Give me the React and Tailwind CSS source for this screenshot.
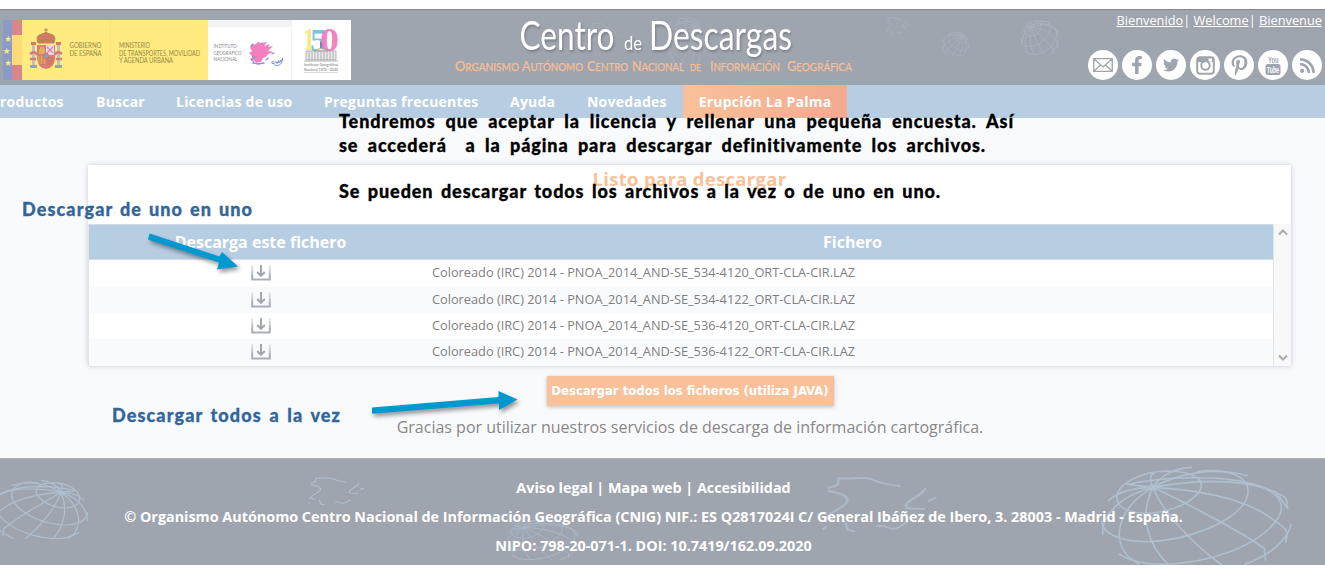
import React from "react";
import { FaFacebookF, FaTwitter, FaPinterestP, FaRss } from "react-icons/fa";

const globeLines = [
  "M42 100C40 62 92 20 160 18C226 18 258 48 232 86C205 124 152 145 108 145C68 143 43 126 42 100",
  "M232 20C290 8 358 28 350 88C342 150 240 220 120 230C50 232 8 206 6 168",
  "M66 58C150 36 286 26 376 62C432 88 442 128 414 172C366 248 254 296 150 298C100 298 66 282 48 268",
  "M127 67C184 25 274 5 349 32",
  "M127 67C214 45 330 42 396 72S436 110 444 130",
  "M127 67C234 75 334 100 394 150S444 200 439 232",
  "M127 67C214 120 334 200 389 250L392 285",
  "M127 67C154 150 224 240 289 300",
  "M127 67C94 150 114 240 164 300",
  "M127 67C54 120 24 210 69 275L94 298",
  "M127 67C54 90 4 150 9 208",
  "M127 67C84 68 44 80 22 107M127 67L67 58M127 67C119 45 119 30 129 25M127 67C144 30 184 8 217 8",
  "M452 178C444 226 400 272 344 298M414 78L444 130",
];

function Globe({ className, flip = false, weight = 1.2 }) {
  return (
    <svg className={className} viewBox="0 0 459 300" preserveAspectRatio="none" fill="none" stroke="currentColor" strokeWidth={weight} strokeLinecap="round">
      <g transform={flip ? "translate(459 0) scale(-1 1)" : undefined}>
        {globeLines.map((d) => <path key={d} d={d} vectorEffect="non-scaling-stroke" />)}
        <ellipse cx="127" cy="67" rx="14" ry="9" fill="currentColor" stroke="none" />
      </g>
    </svg>
  );
}

function Spain({ className }) {
  return (
    <svg className={className} viewBox="0 0 90 58" preserveAspectRatio="none" fill="none" stroke="currentColor" strokeWidth="2" strokeLinecap="round" strokeLinejoin="round">
      <path d="M5 12L12 9L13 2C22 4 30 0 38 3C46 8 54 9 60 10M5 15C14 17 22 20 19 27C14 34 5 36 3 43L10 44" />
      <path d="M18 46L20 54L25 55M43 50C50 48 52 56 60 51L66 46M80 13C77 20 64 25 65 31C68 34 72 32 79 33M83 25L88 22M1 53L3 51" />
    </svg>
  );
}

function Crest() {
  return (
    <svg x="29" y="7" width="34" height="43" viewBox="0 0 34 43">
      <path d="M8 18H26V32Q25 41 17 42Q9 41 8 32Z" fill="#d87f79" />
      <rect x="17" y="18" width="8" height="10" fill="#f3d6da" />
      <path d="M18 20l6 6M24 20l-6 6" stroke="#c98cb4" strokeWidth="1.2" />
      <path d="M10 27v-5h1v-2h4v2h1v5z" fill="#dcb05c" />
      <rect x="9" y="29" width="7" height="8" fill="#e6a55d" />
      <path d="M11 29v9M14 29v9M18 31h6M18 34h6M18 37h4" stroke="#c8645e" strokeWidth=".8" />
      <ellipse cx="17" cy="29" rx="2.4" ry="3" fill="#8b9cc9" stroke="#d87066" />
      <path d="M9 16Q6 8 13 7Q17 4 21 7Q28 8 25 16Z" fill="#d87668" stroke="#b38a52" strokeWidth="1" />
      <path d="M17 1v6M15 3h4M9 14Q17 11 25 14M12 8Q17 12 22 8" fill="none" stroke="#a98c50" strokeWidth="1" />
      <g fill="#c2bfc0">
        <rect x="3" y="18" width="3" height="20" />
        <rect x="28" y="18" width="3" height="20" />
      </g>
      <path d="M2 15h5v3H2zM27 15h5v3h-5z" fill="#cf7d60" />
      <path d="M1 27Q6 23 8 28M33 27Q28 23 26 28M1 32H7M27 32H33" fill="none" stroke="#d47a78" strokeWidth="2.4" />
      <path d="M1 38h7v3H1zM26 38h7v3h-7z" fill="#98a2b6" />
    </svg>
  );
}

function Logos() {
  return (
    <svg className="block h-[60px] w-[352px]" viewBox="0 0 352 60" fontFamily="Lato, sans-serif">
      <rect x="3" width="9" height="60" fill="#8b9bc7" />
      <rect x="12" width="10" height="60" fill="#d7868a" />
      <rect x="12" y="15" width="10" height="30" fill="#fbda78" />
      <g fill="#ffe878" fontSize="8.500" textAnchor="middle" fontFamily="DejaVu Sans, sans-serif">
        <text x="8" y="21.500">★</text>
        <text x="6.500" y="33.500">★</text>
        <text x="8" y="46">★</text>
      </g>
      <rect x="22" width="186" height="60" fill="#ffeb7f" />
      <rect x="110" width="1" height="60" fill="#fde476" />
      <Crest />
      <g fill="#96894f" fontSize="6.800">
        <text x="69.500" y="27.500" textLength="32" lengthAdjust="spacingAndGlyphs">GOBIERNO</text>
        <text x="69.500" y="35.500" textLength="32" lengthAdjust="spacingAndGlyphs">DE ESPAÑA</text>
        <text x="119" y="27.500" textLength="31" lengthAdjust="spacingAndGlyphs">MINISTERIO</text>
        <text x="119" y="35.500" textLength="81" lengthAdjust="spacingAndGlyphs">DE TRANSPORTES, MOVILIDAD</text>
        <text x="119" y="43.200" textLength="54" lengthAdjust="spacingAndGlyphs">Y AGENDA URBANA</text>
      </g>
      <rect x="208" width="143" height="60" fill="#fff" />
      <rect x="208" width="84" height="7" fill="#f3f3f3" />
      <rect x="291" width="1" height="60" fill="#f3f3f3" />
      <g fill="#85858c" fontSize="5.200">
        <text x="213.500" y="27.500" textLength="23" lengthAdjust="spacingAndGlyphs">INSTITUTO</text>
        <text x="213.500" y="34.500" textLength="28" lengthAdjust="spacingAndGlyphs">GEOGRÁFICO</text>
        <text x="213.500" y="41" textLength="24" lengthAdjust="spacingAndGlyphs">NACIONAL</text>
      </g>
      <path d="M251 25l5-1 2-2 3 1 6-1-3 4 6-2-2 3 5-1-5 5 6 1-6 2-2 3-3 1-2 4-5 1-2-3-3 1 1-5-3-3 3-2-2-3z" fill="#f37fc0" />
      <path d="M251 26l2-2M251 39l3 3-1 1 5 1M258 44l6-1M272 34l2-1M253 36l2 2M266 40l2-2" stroke="#8297cb" strokeWidth="1.300" fill="none" strokeLinecap="round" />
      <path d="M274 42q-3-1-2 1.500 2 1 4-2l1 2 1.500-3 .5 2.500 2-3M281 40q-2 2 0 2t1.500-4q-.5 6-3 7t-5 0" stroke="#7d98d2" strokeWidth="1" fill="none" strokeLinecap="round" />
      <g fontFamily="Liberation Serif, serif" fontWeight="700">
        <text x="303" y="30" fontSize="31" fill="#f8ec78" textLength="12" lengthAdjust="spacingAndGlyphs">1</text>
        <text x="310" y="31" fontSize="32" fill="#77c5e9" textLength="17" lengthAdjust="spacingAndGlyphs">5</text>
        <text x="320" y="31" fontSize="34" fill="#f184be" textLength="19" lengthAdjust="spacingAndGlyphs">0</text>
      </g>
      <path d="M320 21q5 4 0 9z" fill="#807bb9" />
      <g fill="#e9e9e9" stroke="#9b9b9b" strokeWidth=".7">
        <path d="M306 31h30v9h-30zM314 31l7-3 7 3z" />
        <path d="M309 32v8M312 32v8M315 32v8M318 32v8M321 32v8M324 32v8M327 32v8M330 32v8M333 32v8M304 41h34" />
      </g>
      <g fill="#999" fontSize="4" fontWeight="700">
        <text x="304" y="46" textLength="34" lengthAdjust="spacingAndGlyphs">Instituto Geográfico</text>
        <text x="304" y="50.500" textLength="34" lengthAdjust="spacingAndGlyphs">Nacional 1870 - 2020</text>
      </g>
      <path d="M304 52.500h34" stroke="#ddd" />
    </svg>
  );
}

function Title() {
  return (
    <svg className="block h-[75px] w-[400px]" viewBox="454 10 400 75" fontFamily="Lato, sans-serif">
      <g fill="#fff" className="drop-shadow-[1px_2px_1px_rgba(80,85,95,0.45)]">
        <text x="519.500" y="49.500" fontSize="40" textLength="95" lengthAdjust="spacingAndGlyphs">Centro</text>
        <text x="624" y="49.500" fontSize="20" textLength="18" lengthAdjust="spacingAndGlyphs">de</text>
        <text x="649" y="49.500" fontSize="40" textLength="143" lengthAdjust="spacingAndGlyphs">Descargas</text>
      </g>
      <g fill="#f6be95" stroke="#f6be95" strokeWidth=".25" fontSize="11">
        <text x="455" y="71" textLength="64" lengthAdjust="spacingAndGlyphs"><tspan fontSize="14">O</tspan>RGANISMO</text>
        <text x="522" y="71" textLength="61" lengthAdjust="spacingAndGlyphs"><tspan fontSize="14">A</tspan>UTÓNOMO</text>
        <text x="587" y="71" textLength="41" lengthAdjust="spacingAndGlyphs"><tspan fontSize="14">C</tspan>ENTRO</text>
        <text x="632" y="71" textLength="52" lengthAdjust="spacingAndGlyphs"><tspan fontSize="14">N</tspan>ACIONAL</text>
        <text x="690" y="71" fontSize="8.500" textLength="11" lengthAdjust="spacingAndGlyphs">DE</text>
        <text x="710" y="71" textLength="70" lengthAdjust="spacingAndGlyphs"><tspan fontSize="14">I</tspan>NFORMACIÓN</text>
        <text x="787" y="71" textLength="65" lengthAdjust="spacingAndGlyphs"><tspan fontSize="14">G</tspan>EOGRÁFICA</text>
      </g>
    </svg>
  );
}

function MailIcon() {
  return (
    <svg className="h-[14px] w-[20px]" viewBox="0 0 20 14" fill="none" stroke="currentColor" strokeWidth="1.300">
      <path d="M.7.700h18.600v12.600H.7zM1 1l9 8 9-8M1 13l6.500-6M19 13l-6.500-6" />
    </svg>
  );
}

function InstagramIcon() {
  return (
    <svg className="h-[19px] w-[19px]" viewBox="0 0 19 19">
      <rect x="1.200" y="1.200" width="16.600" height="16.600" rx="3" fill="none" stroke="currentColor" strokeWidth="2" />
      <path d="M1 6h17V3q0-2-2-2H3Q1 1 1 3z" fill="currentColor" />
      <rect x="12.500" y="2.500" width="3.500" height="3" fill="#fff" />
      <circle cx="9.500" cy="9.500" r="4.200" fill="#fff" stroke="currentColor" strokeWidth="2" />
    </svg>
  );
}

function YoutubeIcon() {
  return (
    <svg className="h-[20px] w-[16px] overflow-visible" viewBox="0 0 16 20" fontFamily="Liberation Sans Narrow, Liberation Sans, sans-serif" fontWeight="700">
      <text x="3" y="7.500" fontSize="9" textLength="10.500" lengthAdjust="spacingAndGlyphs" fill="currentColor">You</text>
      <rect x=".5" y="9" width="15" height="11" rx="2.500" fill="currentColor" />
      <text x="2" y="17.500" fontSize="8.500" textLength="12" lengthAdjust="spacingAndGlyphs" fill="#fff">Tube</text>
    </svg>
  );
}

const social = [
  <MailIcon />,
  <FaFacebookF size={18} />,
  <FaTwitter size={16} />,
  <InstagramIcon />,
  <FaPinterestP size={21} />,
  <YoutubeIcon />,
  <FaRss size={17} />,
];

function Header() {
  return (
    <header className="relative flex h-[76px] shrink-0 overflow-hidden border-t border-[#85878d] bg-[#9fa5af]">
      <Spain className="absolute left-[588px] top-[12px] h-[34px] w-[32px] text-[#a5adb9]" />
      <Globe className="absolute left-[668px] top-[5px] h-[50px] w-[36px] text-[#a6b0bc]" flip weight={0.7} />
      <Spain className="absolute left-[886px] top-[7px] h-[18px] w-[23px] text-[#adb9c7]" />
      <Globe className="absolute left-[942px] top-[21px] h-[25px] w-[27px] text-[#a8b2be]" flip weight={0.7} />
      <Globe className="absolute left-[1021px] top-[9px] h-[36px] w-[38px] text-[#a9b4c1]" weight={0.8} />
      <div className="pt-[10px]"><Logos /></div>
      <div className="relative ml-[102px]"><Title /></div>
      <div className="ml-auto flex flex-col items-end pr-[3px]">
        <div className="flex h-[20px] whitespace-pre text-[12.800px] leading-[20px] text-white">
          <a className="underline">Bienvenido</a><span>| </span><a className="underline">Welcome</a><span>| </span><a className="underline">Bienvenue</a>
        </div>
        <div className="mt-[20px] flex gap-[4px]">
          {social.map((icon, i) => (
            <span key={i} className="flex size-[30px] items-center justify-center rounded-full bg-white text-[#9fa5af]">{icon}</span>
          ))}
        </div>
      </div>
    </header>
  );
}

const links = [
  ["Productos", "w-[74px]"],
  ["Buscar", "w-[49px]"],
  ["Licencias de uso", "w-[117px]"],
  ["Preguntas frecuentes", "w-[155px]"],
  ["Ayuda", "w-[46px]"],
  ["Novedades", "w-[80px]"],
];

function Nav() {
  return (
    <nav className="flex h-[33px] shrink-0 overflow-hidden bg-[#b7cde2] text-[14px] font-bold leading-[33px] tracking-[0.22px] text-white">
      <div className="-ml-[9px] flex gap-[31px] pr-[16px]">
        {links.map(([label, width]) => (
          <a key={label} className={`${width} whitespace-nowrap`}>{label}</a>
        ))}
      </div>
      <a className="w-[164px] bg-gradient-to-r from-[#f9c199] to-[#f2aa91] text-center">Erupción La Palma</a>
    </nav>
  );
}

function DownloadIcon({ id }) {
  return (
    <svg className="h-[17px] w-[20px]" viewBox="0 0 20 17" fill="none">
      <defs>
        <linearGradient id={id} x1="0" y1="0" x2="0" y2="17" gradientUnits="userSpaceOnUse">
          <stop offset="0" stopColor="#c9cdd3" stopOpacity=".3" />
          <stop offset=".7" stopColor="#a9afb8" />
        </linearGradient>
      </defs>
      <path d="M1.200 1V15.500H18.800V1" stroke={`url(#${id})`} strokeWidth="2" />
      <path d="M10 1V11M6.200 8L10 11.800L13.800 8" stroke="#9fa5b1" strokeWidth="2" />
    </svg>
  );
}

const files = ["534-4120", "534-4122", "536-4120", "536-4122"];

function Panel() {
  return (
    <section className="mx-auto flex h-[201px] w-[1203px] flex-col bg-white shadow-[0_0_5px_rgba(90,100,115,0.3)]">
      <h1 className="h-[59px] pt-[2px] text-center text-[18.500px] font-bold leading-[24px] tracking-[0.3px] text-[#f9c199]">
        <span>Listo para descargar</span>
      </h1>
      <div className="flex h-[142px]">
        <div className="w-[1185px] border-l border-[#e3e5e7]">
          <div className="flex h-[36px] items-center border-y border-[#d2deea] bg-[#b7cde2] pb-[1px] text-[16px] font-bold text-white">
            <span className="w-[343px] text-center">Descarga este fichero</span>
            <span className="flex-1 text-center">Fichero</span>
          </div>
          {files.map((file) => (
            <div key={file} className="flex h-[26.400px] items-center pb-[1px] odd:bg-[#f9fafc]">
              <div className="flex w-[343px] justify-center"><DownloadIcon id={`tray-${file}`} /></div>
              <span className="whitespace-nowrap text-[12.780px] text-[#808080]">Coloreado (IRC) 2014 - PNOA_2014_AND-SE_{file}_ORT-CLA-CIR.LAZ</span>
            </div>
          ))}
        </div>
        <div className="flex flex-1 flex-col items-center justify-between border-l border-[#e3e5e7] bg-[#f8f8f8] py-[4px]">
          <svg className="h-[8px] w-[10px]" viewBox="0 0 10 8" fill="none" stroke="#ababab" strokeWidth="2"><path d="M1 6.500L5 2.500L9 6.500" /></svg>
          <svg className="h-[8px] w-[10px]" viewBox="0 0 10 8" fill="none" stroke="#ababab" strokeWidth="2"><path d="M1 1.500L5 5.500L9 1.500" /></svg>
        </div>
      </div>
    </section>
  );
}

function Footer() {
  return (
    <footer className="relative h-[107px] shrink-0 overflow-hidden border-t border-[#a9adb5] bg-[#9fa5af] text-center text-[14.360px] font-bold leading-[29px] text-white">
      <Globe className="absolute left-[-12px] top-[20px] h-[60px] w-[101px] text-[#aebfcf]" flip />
      <Spain className="absolute left-[308px] top-[18px] h-[29px] w-[57px] text-[#aebfcf]" />
      <Globe className="absolute left-[504px] top-[59px] h-[42px] w-[76px] text-[#a8b6c5]" weight={1} />
      <Spain className="absolute left-[822px] top-[17px] h-[58px] w-[116px] text-[#abb9c7]" />
      <Globe className="absolute left-[1099px] top-[6px] h-[100px] w-[195px] text-[#aebfcf]" weight={1.6} />
      <div className="relative -ml-[18px] pt-[14px]">
        <p>Aviso legal | Mapa web | Accesibilidad</p>
        <p className="whitespace-nowrap">© Organismo Autónomo Centro Nacional de Información Geográfica (CNIG) NIF.: ES Q2817024I C/ General Ibáñez de Ibero, 3. 28003 - Madrid - España.</p>
        <p>NIPO: 798-20-071-1. DOI: 10.7419/162.09.2020</p>
      </div>
    </footer>
  );
}

function Annotations() {
  return (
    <div className="font-[Lato,sans-serif] text-[18px] font-black leading-[24px] [-webkit-text-stroke:0.3px_currentColor]">
      <p className="absolute left-[339px] top-[109px] w-[675px] whitespace-nowrap tracking-[0.900px] text-black [text-align-last:justify]">Tendremos que aceptar la licencia y rellenar una pequeña encuesta. Así</p>
      <p className="absolute left-[339px] top-[133px] w-[647px] whitespace-nowrap tracking-[0.900px] text-black [text-align-last:justify]">se accederá &nbsp;a la página para descargar definitivamente los archivos.</p>
      <p className="absolute left-[339px] top-[179px] w-[602px] whitespace-nowrap tracking-[0.900px] text-black [text-align-last:justify]">Se pueden descargar todos los archivos a la vez o de uno en uno.</p>
      <p className="absolute left-[22px] top-[197px] w-[231px] whitespace-nowrap tracking-[1.100px] text-[#32669b] [text-align-last:justify]">Descargar de uno en uno</p>
      <p className="absolute left-[112px] top-[403px] w-[229px] whitespace-nowrap tracking-[1.100px] text-[#32669b] [text-align-last:justify]">Descargar todos a la vez</p>
      <svg className="absolute left-[140px] top-[225px] h-[60px] w-[110px] drop-shadow-[2px_3px_2px_rgba(0,0,0,0.4)]" viewBox="140 225 110 60">
        <path d="M149.500 233.500L219.500 256.500L222 252L238 266.500L217 269.500L219 262.500L148 239.500Z" fill="#0099cf" />
      </svg>
      <svg className="absolute left-[365px] top-[385px] h-[40px] w-[160px] drop-shadow-[2px_3px_2px_rgba(0,0,0,0.4)]" viewBox="365 385 160 40">
        <path d="M372 407.500L498.500 397V391L517.500 399.500L499 410L499 403.500L372 413.800Z" fill="#0099cf" />
      </svg>
    </div>
  );
}

export default function App() {
  return (
    <div className="relative flex h-[574px] w-[1325px] flex-col overflow-hidden bg-white pt-[9px] font-['Open_Sans',sans-serif]">
      <Header />
      <Nav />
      <main className="flex h-[340px] shrink-0 flex-col bg-[#f9fafc] pt-[47px]">
        <div className="pl-[54px]"><Panel /></div>
        <div className="flex flex-col items-center pl-[55px]">
          <button className="mt-[10px] h-[30px] w-[287px] whitespace-nowrap bg-[#f9c199] font-['DejaVu_Sans_Condensed','DejaVu_Sans',sans-serif] text-[13px] font-bold text-white shadow-[0_1px_4px_rgba(90,100,115,0.4)]">Descargar todos los ficheros (utiliza JAVA)</button>
          <p className="mt-[9px] text-[16px] leading-[24px] text-[#888]">Gracias por utilizar nuestros servicios de descarga de información cartográfica.</p>
        </div>
      </main>
      <Footer />
      <Annotations />
    </div>
  );
}
